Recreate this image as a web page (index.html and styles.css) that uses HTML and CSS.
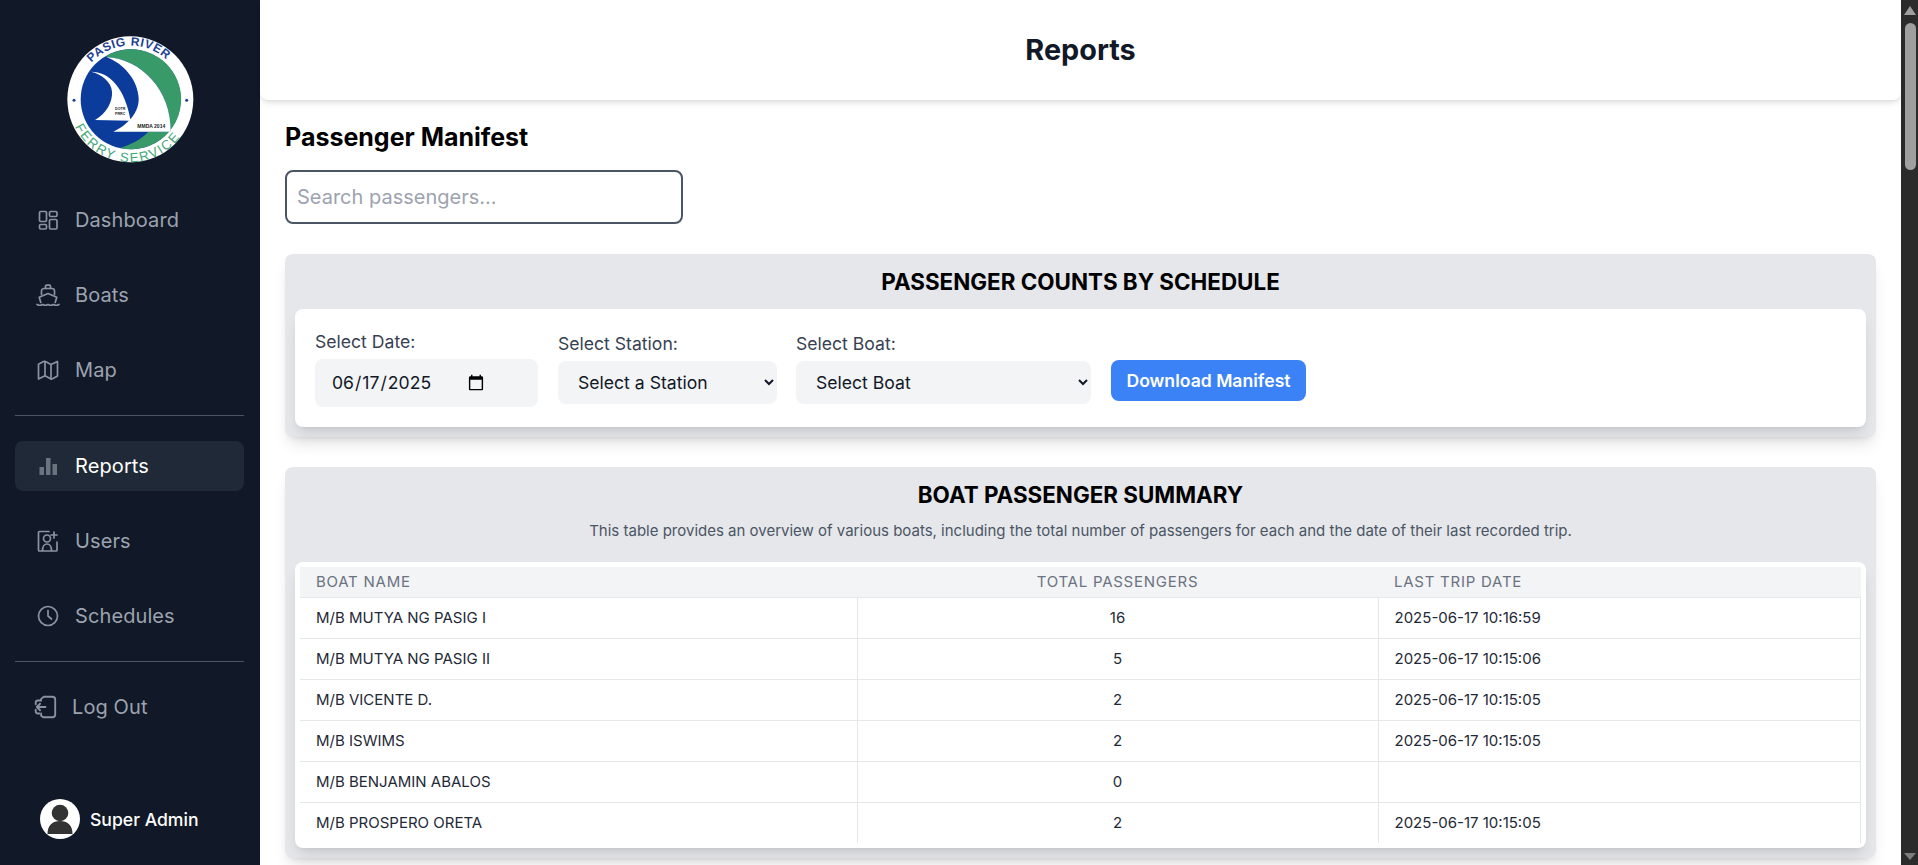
FILE: index.html
```html
<!DOCTYPE html>
<html lang="en">
  <head>
    <meta charset="UTF-8" />
    <meta name="viewport" content="width=device-width, initial-scale=1" />
    <title>Reports</title>
    <link rel="stylesheet" href="styles.css">
  </head>
  <body>
    <div class="app">
      <aside class="sidebar">
        <div class="logo">
          <svg viewBox="0 0 420 420" width="140" height="140">
            <circle cx="211" cy="208" r="189" fill="#fff" />
            <circle cx="212" cy="208" r="150" fill="#0b3c9c" />
            <path d="M140 77A150 150 0 1 1 180 354C210 345 245 328 265 305L332 305C335 180 240 85 140 82Z" fill="#379a68" />
            <path d="M140 82C240 85 335 180 332 305L160 305C205 285 238 245 236 205C234 150 190 100 140 82Z" fill="#fff" />
            <path d="M92 125C150 125 195 175 212 272L105 270C140 250 158 215 156 185C154 155 125 132 92 125Z" fill="#fff" />
            <circle cx="42" cy="211" r="4.500" fill="#1d3f94" />
            <circle cx="380" cy="211" r="4.500" fill="#1d3f94" />
            <path id="arcTop" d="M94 98A160 160 0 0 1 362 153" fill="none" />
            <path id="arcBottom" d="M45 290A184 184 0 0 0 385 275" fill="none" />
            <text class="logo-top"><textPath href="#arcTop">PASIG RIVER</textPath></text>
            <text class="logo-bottom"><textPath href="#arcBottom">FERRY SERVICE</textPath></text>
            <text class="logo-small" x="165" y="240">DOTR</text>
            <text class="logo-small" x="165" y="256">PRRC</text>
            <text class="logo-mmda" x="232" y="293">MMDA 2014</text>
          </svg>
        </div>

        <nav class="nav-group">
          <a class="nav-item">
            <svg class="nav-icon" viewBox="0 0 24 24">
              <rect x="3.500" y="3.500" width="7" height="10" rx="1.200" />
              <rect x="3.500" y="16.500" width="7" height="4.500" rx="1.200" />
              <rect x="13.500" y="3.500" width="7.500" height="5" rx="1.200" />
              <rect x="13.500" y="11.500" width="7.500" height="9.500" rx="1.200" />
            </svg>
            Dashboard
          </a>
          <a class="nav-item">
            <svg class="nav-icon" viewBox="0 0 24 24">
              <path d="M9.500 5.500V3.200a1 1 0 0 1 1-1h3a1 1 0 0 1 1 1v2.300" />
              <path d="M5.500 11.500V8a2.500 2.500 0 0 1 2.500-2.500h8A2.500 2.500 0 0 1 18.500 8v3.500" />
              <path d="M4.800 19.500L3.200 14.200L12 10.500L20.800 14.200L19.200 19.500" />
              <path d="M1 21.500c1.800 1 3.700 1 5.500 0c1.800 1 3.700 1 5.500 0c1.800 1 3.700 1 5.500 0c1.800 1 3.700 1 5.500 0" />
            </svg>
            Boats
          </a>
          <a class="nav-item">
            <svg class="nav-icon" viewBox="0 0 24 24">
              <path d="M2.500 6.200L7.500 3.500Q9 3 10 3.800L14 6Q15 6.500 16 6L21.500 3.500V18L16.500 20.800Q15 21.300 14 20.500L10 18.300Q9 17.800 8 18.300L2.500 21Z" />
              <path d="M9 3.500V18" />
              <path d="M15 6.500V21" />
            </svg>
            Map
          </a>
        </nav>

        <nav class="nav-group">
          <a class="nav-item active">
            <svg class="nav-icon" viewBox="0 0 24 24">
              <rect class="bar" x="3.500" y="13" width="4.500" height="8" />
              <rect class="bar" x="10" y="4" width="4.500" height="17" />
              <rect class="bar" x="16.500" y="10" width="4.500" height="11" />
            </svg>
            Reports
          </a>
          <a class="nav-item">
            <svg class="nav-icon" viewBox="0 0 24 24">
              <path d="M13 2.500H3.500a1 1 0 0 0-1 1V21a1 1 0 0 0 1 1H20a1 1 0 0 0 1-1v-8" />
              <circle cx="11" cy="9.500" r="3.500" />
              <path d="M6.500 21.500c0-4 2-6.500 4.500-6.500s4.500 2.500 4.500 6.500" />
              <path d="M18 3v6M15 6h6" />
            </svg>
            Users
          </a>
          <a class="nav-item">
            <svg class="nav-icon" viewBox="0 0 24 24">
              <circle cx="12" cy="12" r="9.500" />
              <path d="M12 6.500V12L15.500 15" />
            </svg>
            Schedules
          </a>
        </nav>

        <nav class="nav-group last">
          <a class="nav-item logout">
            <svg class="nav-icon" viewBox="0 0 24 24">
              <path d="M7.500 6V4.500L10 2.500H18a2.500 2.500 0 0 1 2.500 2.500V19a2.500 2.500 0 0 1-2.500 2.500H9.500L7.500 20V18" />
              <path d="M7 6H4.500A2 2 0 0 0 2.500 8v1.500M2.500 14.500V16a2 2 0 0 0 2 2H6" />
              <path d="M11.500 12H3.500M6.500 9L3.500 12L6.500 15" />
            </svg>
            Log Out
          </a>
        </nav>

        <div class="profile">
          <svg class="avatar" viewBox="0 0 40 40">
            <circle cx="20" cy="20" r="20" fill="#fff" />
            <circle cx="20" cy="14" r="8.300" fill="#333" />
            <path d="M7.500 35c0-9 5-13 12.500-13S32.500 26 32.500 35Z" fill="#333" />
          </svg>
          <span>Super Admin</span>
        </div>
      </aside>

      <main class="main">
        <header class="topbar">
          <h1>Reports</h1>
        </header>

        <section class="content">
          <h2>Passenger Manifest</h2>
          <input class="search" type="text" placeholder="Search passengers..." />

          <div class="panel">
            <h3>PASSENGER COUNTS BY SCHEDULE</h3>
            <div class="card filters">
              <label class="field date-field">
                Select Date:
                <input type="date" value="2025-06-17" />
              </label>
              <label class="field station-field">
                Select Station:
                <select><option>Select a Station</option></select>
              </label>
              <label class="field boat-field">
                Select Boat:
                <select><option>Select Boat</option></select>
              </label>
              <button type="button">Download Manifest</button>
            </div>
          </div>

          <div class="panel">
            <h3>BOAT PASSENGER SUMMARY</h3>
            <p class="note">This table provides an overview of various boats, including the total number of passengers for each and the date of their last recorded trip.</p>
            <div class="card table-card">
              <table>
                <colgroup>
                  <col class="col-name" />
                  <col class="col-total" />
                  <col class="col-date" />
                </colgroup>
                <thead>
                  <tr>
                    <th>Boat Name</th>
                    <th class="center">Total Passengers</th>
                    <th>Last Trip Date</th>
                  </tr>
                </thead>
                <tbody>
                  <tr><td>M/B MUTYA NG PASIG I</td><td class="center">16</td><td>2025-06-17 10:16:59</td></tr>
                  <tr><td>M/B MUTYA NG PASIG II</td><td class="center">5</td><td>2025-06-17 10:15:06</td></tr>
                  <tr><td>M/B VICENTE D.</td><td class="center">2</td><td>2025-06-17 10:15:05</td></tr>
                  <tr><td>M/B ISWIMS</td><td class="center">2</td><td>2025-06-17 10:15:05</td></tr>
                  <tr><td>M/B BENJAMIN ABALOS</td><td class="center">0</td><td></td></tr>
                  <tr><td>M/B PROSPERO ORETA</td><td class="center">2</td><td>2025-06-17 10:15:05</td></tr>
                </tbody>
              </table>
            </div>
          </div>
        </section>
      </main>

      <div class="scrollbar">
        <span class="arrow-up"></span>
        <span class="thumb"></span>
        <span class="arrow-down"></span>
      </div>
    </div>
  </body>
</html>
```

FILE: styles.css
```css
* {
  box-sizing: border-box;
}
body {
  margin: 0;
  height: 100vh;
  overflow: hidden;
  font-family: Inter, "Liberation Sans", sans-serif;
  color: #111827;
  background: #fff;
}
.app {
  display: flex;
  height: 865px;
  overflow: hidden;
}

/* sidebar */
.sidebar {
  width: 260px;
  flex: none;
  display: flex;
  flex-direction: column;
  padding: 30px 16px 26px 15px;
  background: #111827;
}
.logo {
  height: 140px;
  margin: 0 0 25px 45px;
}
.logo svg {
  display: block;
}
.logo-top {
  font: 700 36px "Liberation Sans", sans-serif;
  letter-spacing: 2px;
  fill: #1d3f94;
}
.logo-bottom {
  font: 400 40px "Liberation Sans", sans-serif;
  letter-spacing: 5px;
  fill: #45a878;
}
.logo-small {
  font: 700 11px "Liberation Sans", sans-serif;
  fill: #222;
}
.logo-mmda {
  font: 700 15px "Liberation Sans", sans-serif;
  fill: #222;
}
.nav-group {
  display: flex;
  flex-direction: column;
  gap: 25px;
  padding: 0 0 20px;
  margin-bottom: 25px;
  border-bottom: 1px solid #4b5563;
}
.nav-group.last {
  margin-bottom: 0;
  margin-top: -5px;
  padding: 0;
  border: 0;
}
.nav-item {
  display: flex;
  align-items: center;
  gap: 15px;
  height: 50px;
  padding-left: 21px;
  border-radius: 8px;
  font-size: 20px;
  letter-spacing: 0.100px;
  color: #9ca3af;
}
.nav-item.active {
  background: #1f2937;
  color: #fff;
}
.nav-item.logout {
  padding-left: 18px;
  gap: 13px;
}
.logout .nav-icon {
  width: 26px;
  height: 26px;
}
.nav-icon {
  width: 24px;
  height: 24px;
  flex: none;
  fill: none;
  stroke: #8b93a1;
  stroke-width: 1.700;
  stroke-linecap: round;
  stroke-linejoin: round;
}
.nav-icon .bar {
  fill: #6b7280;
  stroke: none;
}
.profile {
  display: flex;
  align-items: center;
  gap: 10px;
  margin-top: auto;
  padding-left: 25px;
  font-size: 17.600px;
  font-weight: 500;
  color: #fff;
}
.avatar {
  width: 40px;
  height: 40px;
}

/* main */
.main {
  flex: 1;
  min-width: 0;
}
.topbar {
  display: flex;
  align-items: center;
  justify-content: center;
  height: 100px;
  background: #fff;
  border-radius: 0 0 8px 8px;
  box-shadow: 0 4px 6px -1px rgba(0, 0, 0, 0.1), 0 2px 4px -2px rgba(0, 0, 0, 0.1);
}
h1 {
  margin: 0;
  font-size: 28.800px;
  line-height: 36px;
  font-weight: 700;
}
.content {
  padding: 21px 25px 0;
}
h2 {
  margin: 0 0 17px;
  font-size: 25px;
  line-height: 32px;
  font-weight: 700;
  color: #000;
}
.search {
  display: block;
  width: 398px;
  height: 54px;
  margin-bottom: 30px;
  padding: 0 10px;
  border: 2px solid #4b5563;
  border-radius: 8px;
  font: 20px Inter, sans-serif;
}
.search::placeholder {
  color: #9ca3af;
}
.panel {
  padding: 12px 10px 10px;
  margin-bottom: 30px;
  background: #e5e7eb;
  border-radius: 8px;
  box-shadow: 0 10px 15px -3px rgba(0, 0, 0, 0.1), 0 4px 6px -4px rgba(0, 0, 0, 0.1);
}
h3 {
  margin: 0 0 11px;
  text-align: center;
  font-size: 22.400px;
  line-height: 32px;
  font-weight: 700;
  color: #000;
}
.card {
  background: #fff;
  border-radius: 8px;
  box-shadow: 0 10px 15px -3px rgba(0, 0, 0, 0.1), 0 4px 6px -4px rgba(0, 0, 0, 0.1);
}
.filters {
  display: flex;
  align-items: center;
  height: 118px;
  padding: 0 20px;
}
.field {
  display: flex;
  flex-direction: column;
  gap: 5px;
  font-size: 17.600px;
  line-height: 24px;
  color: #374151;
}
.date-field {
  width: 223px;
  margin-right: 20px;
}
.station-field {
  width: 219px;
  margin-right: 19px;
}
.boat-field {
  width: 295px;
  margin-right: 20px;
}
.field input,
.field select {
  width: 100%;
  border: 0;
  border-radius: 8px;
  background-color: #f3f4f6;
  font: 17.600px Inter, sans-serif;
  color: #111827;
}
.field input {
  height: 48px;
  padding: 0 51px 0 16px;
}
.field select {
  height: 43px;
  padding: 0 12px 0 16px;
}
button {
  width: 195px;
  height: 41px;
  margin-top: 25px;
  border: 0;
  border-radius: 8px;
  background: #3b82f6;
  color: #fff;
  font: 600 17.600px Inter, sans-serif;
}
.note {
  margin: -1px 0 21px;
  text-align: center;
  font-size: 15px;
  line-height: 20px;
  color: #4b5563;
}
.table-card {
  padding: 5px;
}

/* table */
table {
  width: 100%;
  table-layout: fixed;
  border-collapse: collapse;
  font-size: 15px;
}
.col-name {
  width: 557px;
}
.col-total {
  width: 521px;
}
th {
  height: 30px;
  padding: 0 16px;
  background: #f3f4f6;
  text-align: left;
  font-weight: 400;
  text-transform: uppercase;
  letter-spacing: 0.05em;
  color: #6b7280;
}
td {
  height: 41px;
  padding: 0 16px;
  border-bottom: 1px solid #e5e7eb;
  border-right: 1px solid #e5e7eb;
  color: #1f2937;
}
tbody tr:first-child td {
  border-top: 1px solid #e5e7eb;
}
tbody tr:last-child td {
  border-bottom: 0;
}
th.center,
td.center {
  text-align: center;
}

/* window scrollbar */
.scrollbar {
  width: 17px;
  flex: none;
  position: relative;
  background: #2b2b2b;
}
.thumb {
  position: absolute;
  left: 4px;
  top: 23px;
  width: 11px;
  height: 147px;
  border-radius: 6px;
  background: #9f9f9f;
}
.arrow-up,
.arrow-down {
  position: absolute;
  left: 3px;
  width: 0;
  height: 0;
  border-left: 6px solid transparent;
  border-right: 6px solid transparent;
}
.arrow-up {
  top: 6px;
  border-bottom: 9px solid #9f9f9f;
}
.arrow-down {
  bottom: 5px;
  border-top: 7px solid #7d7d7d;
}
```
